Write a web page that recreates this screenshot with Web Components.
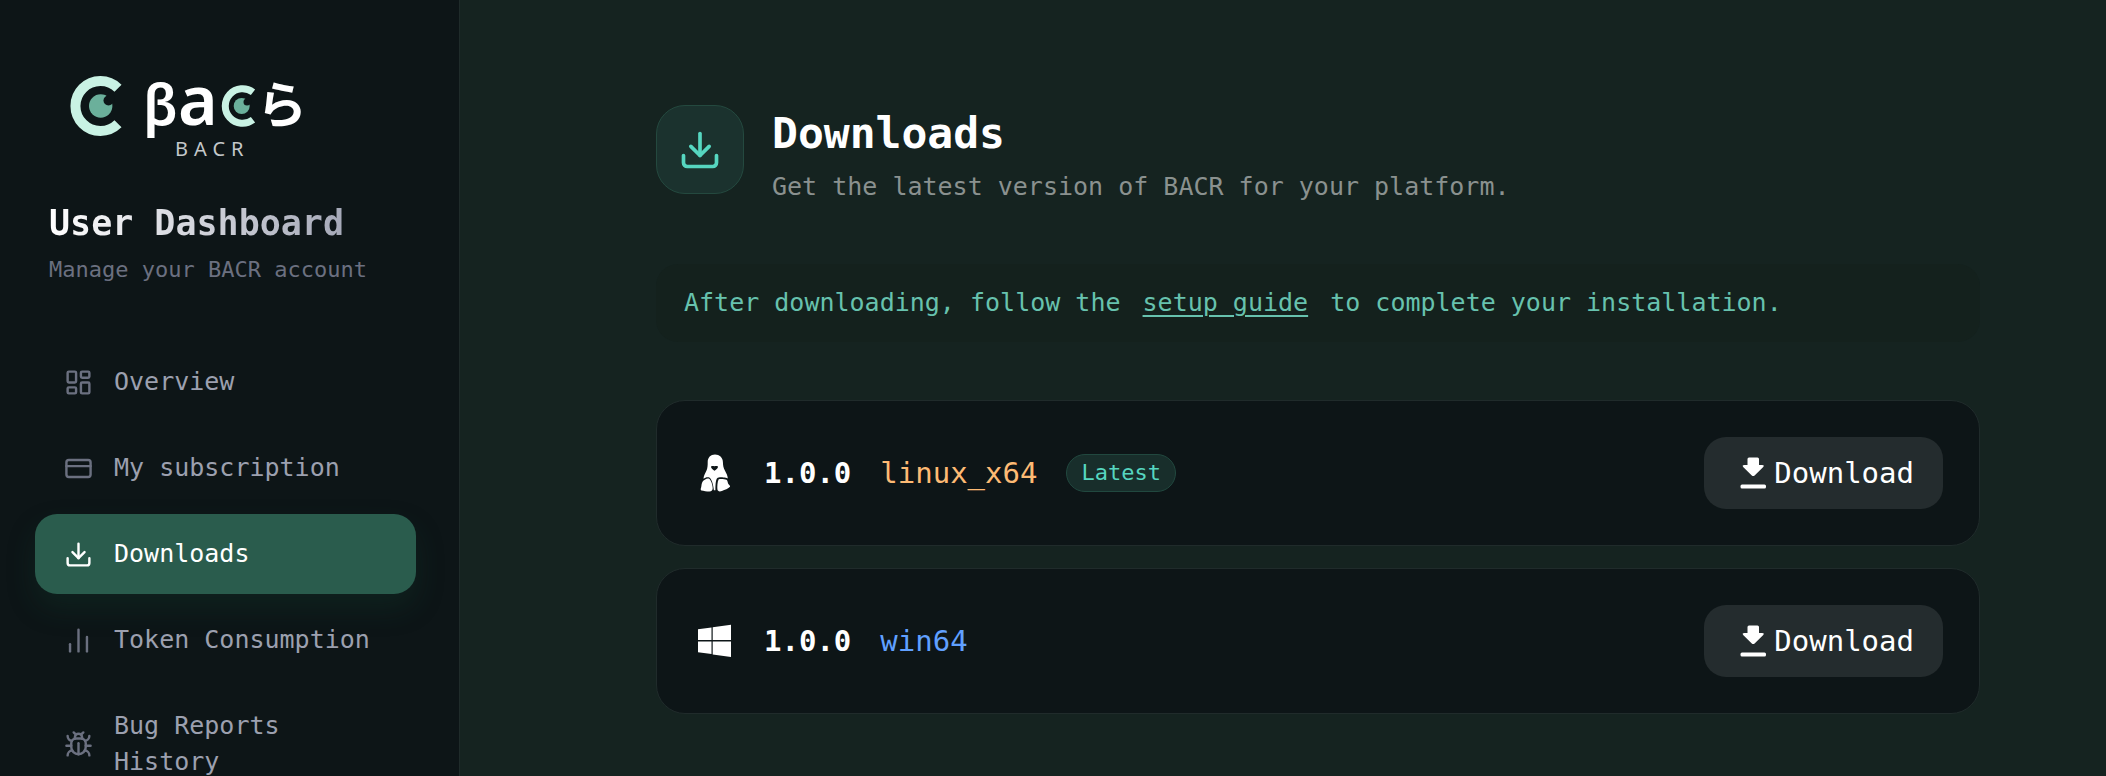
<!DOCTYPE html>
<html lang="en">
<head>
<meta charset="utf-8">
<meta name="viewport" content="width=device-width, initial-scale=1">
<title>BACR - Downloads</title>
<style>
  body {
    margin: 0;
    background: #152320;
    color: #fff;
    font-family: "DejaVu Sans Mono", monospace;
    font-size: 25px;
    line-height: 36px;
  }
</style>
</head>
<body>
<app-shell>
  <side-bar slot="sidebar" heading="User Dashboard" tagline="Manage your BACR account">
    <brand-logo slot="logo"></brand-logo>
    <nav-item icon="dashboard" href="#overview">Overview</nav-item>
    <nav-item icon="card" href="#subscription">My subscription</nav-item>
    <nav-item icon="download" href="#downloads" active>Downloads</nav-item>
    <nav-item icon="chart" href="#tokens">Token Consumption</nav-item>
    <nav-item icon="bug" href="#bugs">Bug Reports History</nav-item>
  </side-bar>
  <page-header icon="download">
    Downloads
    <span slot="description">Get the latest version of BACR for your platform.</span>
  </page-header>
  <info-banner>After downloading, follow the <a href="#setup">setup guide</a> to complete your installation.</info-banner>
  <release-list></release-list>
</app-shell>

<script>
const ICONS = {
  dashboard: `<rect x="3" y="3" width="7" height="9" rx="1"/><rect x="14" y="3" width="7" height="5" rx="1"/><rect x="14" y="12" width="7" height="9" rx="1"/><rect x="3" y="16" width="7" height="5" rx="1"/>`,
  card: `<rect x="2" y="5" width="20" height="14" rx="2"/><path d="M2 10h20"/>`,
  download: `<path d="M21 15v4a2 2 0 0 1-2 2H5a2 2 0 0 1-2-2v-4"/><path d="m7 10 5 5 5-5"/><path d="M12 15V3"/>`,
  chart: `<path d="M5 21v-6"/><path d="M12 21V3"/><path d="M19 21V9"/>`,
  bug: `<path d="m8 2 1.88 1.88"/><path d="M14.12 3.88 16 2"/><path d="M9 7.13v-1a3 3 0 1 1 6 0v1"/><path d="M12 20c-3.3 0-6-2.7-6-6v-3a4 4 0 0 1 4-4h4a4 4 0 0 1 4 4v3c0 3.3-2.7 6-6 6"/><path d="M12 20v-9"/><path d="M6.53 9C4.6 8.8 3 7.1 3 5"/><path d="M6 13H2"/><path d="M3 21c0-2.1 1.7-3.9 3.8-4"/><path d="M20.97 5c0 2.1-1.6 3.8-3.5 4"/><path d="M22 13h-4"/><path d="M17.2 17c2.1.1 3.8 1.9 3.8 4"/>`,
};

// filled glyphs, drawn on a 42 unit grid
const SOLID_ICONS = {
  linux: `<path d="M22 2.600c-4.400 0-7.300 3-7.300 7.400 0 3.400 0 6-1.300 8.800-1.500 3-2.900 5.600-2.900 8 1.600-1.300 3.500-2 5.200-1.500 2.900.9 4.600 7 5.200 13h1.500c0-4 .1-9.600 1.500-11.800 1.800-1.700 4.700-1.200 6.500-1.100 1.700.1 3.200.3 4.400 1-.1-2.600-1.400-4.900-2.800-7.600-1.700-3.100-2-5.600-2.100-8.800-.1-4.400-3.500-7.400-7.900-7.400z"/>
    <path d="M18 14.800c0-.9 1.700-.9 3.500-.6 1.800-.3 3.500-.3 3.500.6 0 1.500-2.200 3.200-3.500 4-1.300-.8-3.500-2.500-3.500-4z" fill="#0d1517"/>
    <path d="M10 29c1.500-1.300 3.800-3.200 5.700-2.400 2.300 1.100 4 6.300 4 9.700 0 2-1 3.100-3.200 3.100-3 0-5.800-.6-8.100-1-1-.3-.8-1.700-.3-2.900.5-1.500.2-4.500 1.900-6.500z"/>
    <path d="M25.700 27.200c2.200-.6 5.800-.2 7.800.5 1.200.6 1 2.500 1.700 4 .6 1.100 2.300 1.800 1.800 3.100-1.700 1.900-5.200 3-8.100 4.300-2.500.8-4.300.2-4.500-1.800-.2-3-.1-7.400 1.300-10.100z"/>`,
  windows: `<path d="M5 9.300l13.500-1.900v12.700H5zM19.700 7.200L38 4.700v15.400H19.700zM5 21.500h13.500v12.600L5 32.200zM19.700 21.500H38V37l-18.300-2.600z"/>`,
  save: `<path d="M17 5.500h8.500q1.500 0 1.500 1.500V13h3q3 0 1 2.200l-8.400 8.200q-1.400 1.400-2.800 0l-8.400-8.200Q9.500 13 12.500 13h3V7Q15.500 5.500 17 5.500z"/><rect x="8.500" y="32.500" width="25.500" height="4" rx="1.500"/>`,
};

class AppShell extends HTMLElement {
  constructor() {
    super();
    this.attachShadow({ mode: 'open' }).innerHTML = `
      <style>
        :host { display: grid; grid-template-columns: 460px 1fr; height: 100vh; overflow: hidden; }
        main { overflow: hidden; padding: 105px 126px 60px 196px; }
      </style>
      <slot name="sidebar"></slot>
      <main><slot></slot></main>
    `;
  }
}

class UiIcon extends HTMLElement {
  connectedCallback() {
    const name = this.getAttribute('name');
    const solid = name in SOLID_ICONS;
    this.attachShadow({ mode: 'open' }).innerHTML = `
      <style>
        :host { display: block; flex: none; width: 29px; height: 29px; }
        svg { display: block; width: 100%; height: 100%; stroke-width: 2; stroke-linecap: round; stroke-linejoin: round; }
      </style>
      <svg aria-hidden="true" ${solid
        ? 'viewBox="0 0 42 42" fill="currentColor"'
        : 'viewBox="0 0 24 24" fill="none" stroke="currentColor"'}>${solid ? SOLID_ICONS[name] : ICONS[name]}</svg>
    `;
  }
}

class BrandLogo extends HTMLElement {
  constructor() {
    super();
    this.attachShadow({ mode: 'open' }).innerHTML = `
      <style>
        :host { display: block; }
        svg { display: block; width: 270px; height: 130px; }
        .mark { fill: none; stroke: #c9f2e4; }
        .eye { fill: #6bb09b; }
        .cut { fill: #0d1517; }
        .word { fill: #fff; font-family: "Noto Sans", sans-serif; font-weight: 600; }
        .kana { font-family: "Noto Sans CJK JP", sans-serif; font-weight: 700; }
        .caption { fill: #c4c8ca; font: 20px "Noto Sans", sans-serif; letter-spacing: 6px; }
      </style>
      <svg viewBox="0 -20 270 130" role="img" aria-label="BACR">
        <path class="mark" stroke-width="10" d="M69 28.200A25 25 0 1 0 69 63.800"/>
        <circle class="eye" cx="51.700" cy="46" r="11.700"/>
        <circle class="cut" cx="59.500" cy="40.500" r="5"/>
        <path class="cut" d="M58 41L60 32L66 36L65 43z"/>
        <text class="word" x="94" y="65" font-size="56">β</text>
        <text class="word" x="129" y="65" font-size="68">a</text>
        <path class="mark" stroke-width="7" d="M204 32.200A17.300 17.300 0 1 0 204 59.800"/>
        <circle class="eye" cx="192.700" cy="46" r="8"/>
        <circle class="cut" cx="198" cy="42" r="3.500"/>
        <path class="cut" d="M197 42L198 36L203 39L202 44z"/>
        <text class="word kana" x="208" y="63" font-size="50">ら</text>
        <text class="caption" x="126" y="96">BACR</text>
      </svg>
    `;
  }
}

class SideBar extends HTMLElement {
  connectedCallback() {
    this.attachShadow({ mode: 'open' }).innerHTML = `
      <style>
        :host { display: block; box-sizing: border-box; overflow: hidden; background: #0d1517; border-right: 1px solid #1f2b2a; padding: 40px 43px 0 35px; }
        header { padding: 0 14px 56px; }
        h2 {
          width: fit-content;
          margin: 28px 0 6px;
          font-size: 35px;
          line-height: 50px;
          background: linear-gradient(90deg, #fff, #a5a9b8);
          background-clip: text;
          color: transparent;
        }
        p { margin: 0; color: #6b7080; font-size: 22px; line-height: 32px; white-space: nowrap; }
        nav { display: flex; flex-direction: column; gap: 6px; }
      </style>
      <header>
        <slot name="logo"></slot>
        <h2></h2>
        <p></p>
      </header>
      <nav aria-label="Dashboard"><slot></slot></nav>
    `;
    this.shadowRoot.querySelector('h2').textContent = this.getAttribute('heading');
    this.shadowRoot.querySelector('p').textContent = this.getAttribute('tagline');
  }
}

class NavItem extends HTMLElement {
  connectedCallback() {
    this.attachShadow({ mode: 'open' }).innerHTML = `
      <style>
        :host { display: block; }
        a { display: flex; align-items: center; gap: 21px; padding: 22px 29px; border-radius: 22px; color: #9ca0af; text-decoration: none; }
        ui-icon { color: #6b7080; }
        :host([active]) a { background: #2a5c4d; color: #fff; box-shadow: 0 14px 28px rgba(20, 70, 50, 0.25); }
        :host([active]) ui-icon { color: #fff; }
      </style>
      <a href="${this.getAttribute('href')}">
        <ui-icon name="${this.getAttribute('icon')}"></ui-icon>
        <span><slot></slot></span>
      </a>
    `;
    if (this.hasAttribute('active')) {
      this.shadowRoot.querySelector('a').setAttribute('aria-current', 'page');
    }
  }
}

class PageHeader extends HTMLElement {
  connectedCallback() {
    this.attachShadow({ mode: 'open' }).innerHTML = `
      <style>
        :host { display: flex; align-items: flex-start; gap: 28px; margin-bottom: 59px; }
        .badge { display: grid; place-items: center; box-sizing: border-box; width: 88px; height: 89px; border: 1px solid #24493f; border-radius: 29px; background: #1b322e; color: #56d6c0; }
        ui-icon { width: 44px; height: 44px; }
        h1 { margin: 0 0 8px; font-size: 43px; line-height: 56px; }
        p { margin: 0; color: #8a918f; }
      </style>
      <div class="badge"><ui-icon name="${this.getAttribute('icon')}"></ui-icon></div>
      <div>
        <h1><slot></slot></h1>
        <p><slot name="description"></slot></p>
      </div>
    `;
  }
}

class InfoBanner extends HTMLElement {
  constructor() {
    super();
    this.attachShadow({ mode: 'open' }).innerHTML = `
      <style>
        :host { display: block; margin-bottom: 58px; padding: 21px 28px; border-radius: 22px; background: #14211d; color: #67c2ae; }
        ::slotted(a) { margin: 0 7px; color: inherit; text-decoration-thickness: 2px; text-underline-offset: 4px; }
      </style>
      <slot></slot>
    `;
  }
}

class ReleaseCard extends HTMLElement {
  constructor() {
    super();
    this.attachShadow({ mode: 'open' }).innerHTML = `
      <style>
        :host { display: flex; align-items: center; gap: 29px; padding: 36px; border: 1px solid #202b2b; border-radius: 29px; background: #0d1517; font-size: 29px; }
        ui-icon { width: 42px; height: 42px; }
        .linux { color: #fdba74; }
        .windows { color: #60a0ff; }
        .tag { padding: 0 14px; border: 1px solid #21483f; border-radius: 19px; background: #182e2b; color: #56d6c0; font-size: 22px; }
        button { display: flex; align-items: center; margin-left: auto; padding: 18px 29px 18px 28px; border: 0; border-radius: 22px; background: #242c2e; color: #fff; font: inherit; line-height: 36px; cursor: pointer; }
        button ui-icon { margin: -3px 0; }
      </style>
      <ui-icon class="os"></ui-icon>
      <strong class="version"></strong>
      <span class="platform"></span>
      <span class="tag">Latest</span>
      <button type="button"><ui-icon name="save"></ui-icon>Download</button>
    `;
  }

  set data(release) {
    const root = this.shadowRoot;
    root.querySelector('.os').setAttribute('name', release.os);
    root.querySelector('.version').textContent = release.version;
    root.querySelector('.platform').textContent = release.platform;
    root.querySelector('.platform').classList.add(release.os);
    if (!release.latest) root.querySelector('.tag').remove();
  }
}

class ReleaseList extends HTMLElement {
  constructor() {
    super();
    this.attachShadow({ mode: 'open' }).innerHTML = `
      <style>
        :host { display: flex; flex-direction: column; gap: 22px; }
      </style>
    `;
  }

  connectedCallback() {
    const releases = [
      { os: 'linux', version: '1.0.0', platform: 'linux_x64', latest: true },
      { os: 'windows', version: '1.0.0', platform: 'win64', latest: false },
    ];
    releases.forEach(release => {
      const card = document.createElement('release-card');
      card.data = release;
      this.shadowRoot.appendChild(card);
    });
  }
}

customElements.define('ui-icon', UiIcon);
customElements.define('brand-logo', BrandLogo);
customElements.define('nav-item', NavItem);
customElements.define('side-bar', SideBar);
customElements.define('page-header', PageHeader);
customElements.define('info-banner', InfoBanner);
customElements.define('release-card', ReleaseCard);
customElements.define('release-list', ReleaseList);
customElements.define('app-shell', AppShell);
</script>
</body>
</html>
